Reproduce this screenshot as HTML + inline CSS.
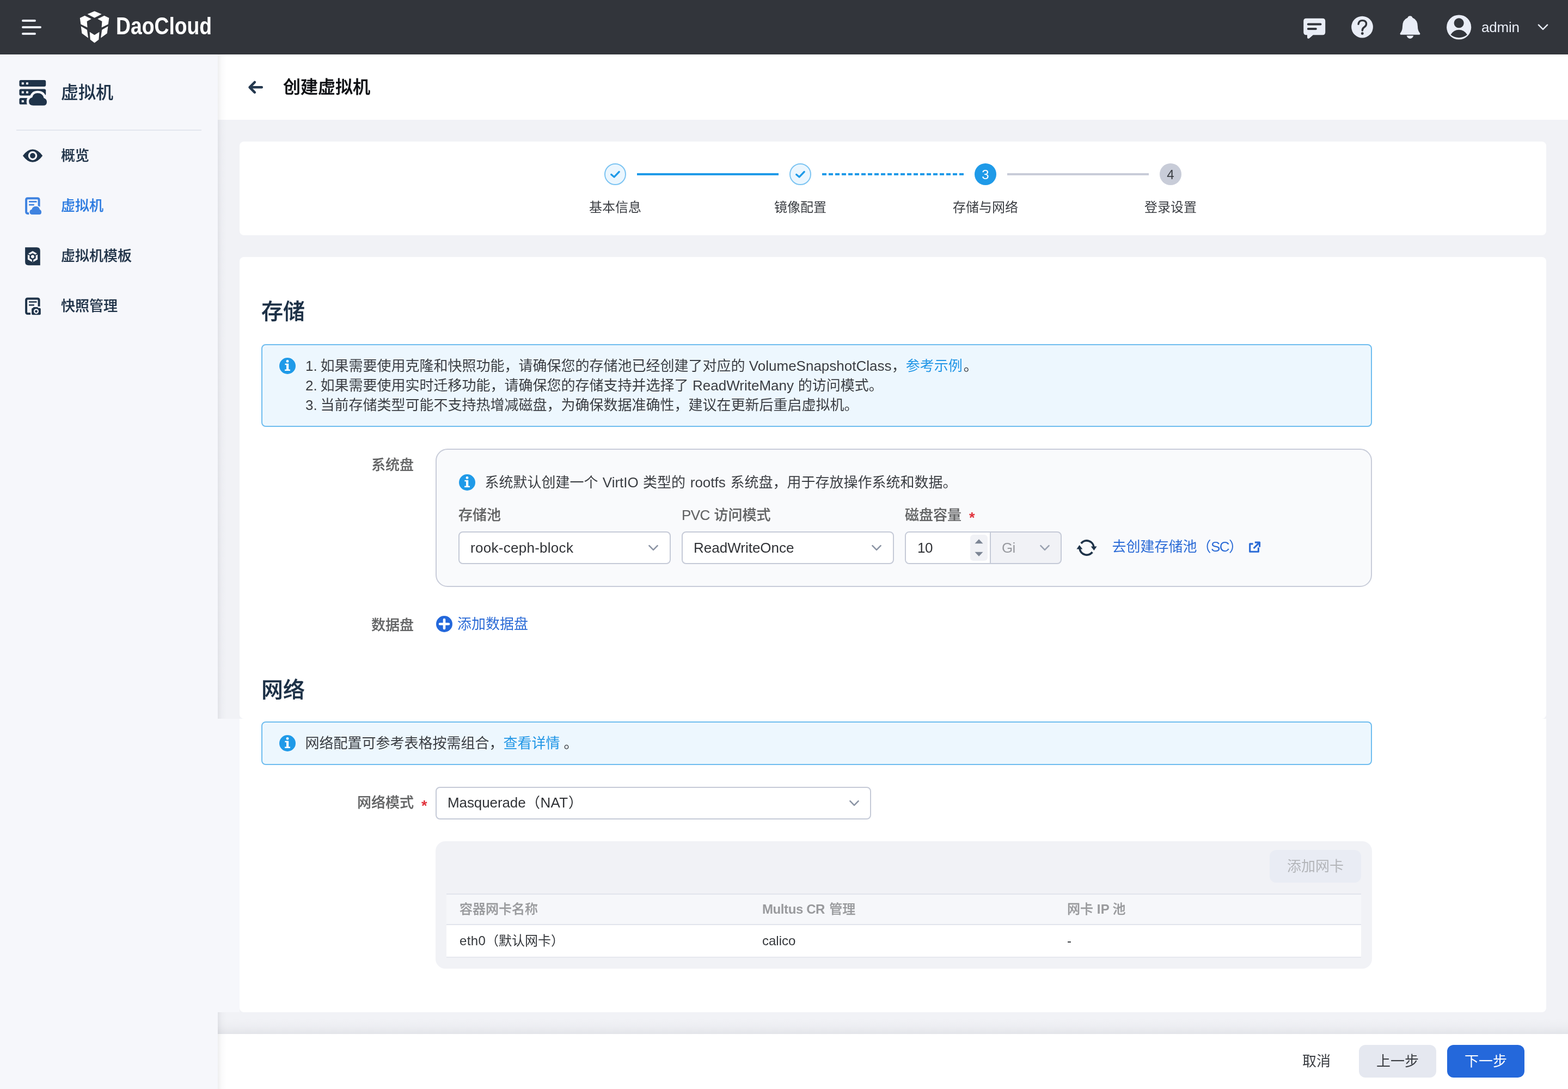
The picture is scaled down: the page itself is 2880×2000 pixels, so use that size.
<!DOCTYPE html>
<html lang="zh-CN">
<head>
<meta charset="utf-8">
<title>创建虚拟机</title>
<style>
*{box-sizing:border-box;margin:0;padding:0}
html,body{width:2880px;height:2000px;overflow:hidden;background:#f1f2f6}
body{will-change:transform;position:relative;font-family:"Liberation Sans","Noto Sans CJK SC",sans-serif;font-size:26px;color:#3a3d42;-webkit-font-smoothing:antialiased}
.abs{position:absolute}
.t{position:absolute;white-space:nowrap;line-height:1}
svg{position:absolute;display:block;overflow:visible}
a{text-decoration:none;color:inherit}

/* header */
#hdr{left:0;top:0;width:2880px;height:100px;background:#32353b}
/* sidebar */
#side{left:0;top:100px;width:400px;height:1900px;background:#f6f7fb}
#sideshadow1{left:400px;top:100px;width:16px;height:1220px;background:linear-gradient(90deg,rgba(30,35,50,.075),rgba(30,35,50,.02) 45%,rgba(30,35,50,0))}
#sideshadow2{left:400px;top:1859px;width:16px;height:141px;background:linear-gradient(90deg,rgba(30,35,50,.075),rgba(30,35,50,.02) 45%,rgba(30,35,50,0))}
#strip{left:400px;top:1320px;width:40px;height:539px;background:#f6f7fb}
.mi{font-size:26px;font-weight:500;-webkit-text-stroke:0.2px currentColor;color:#1f3247;left:112px}
.mi.on{color:#2c7be0}
/* title bar */
#tbar{left:400px;top:100px;width:2480px;height:120px;background:#fff}
/* cards */
.card{background:#fff;border-radius:8px}
#steps{left:440px;top:260px;width:2400px;height:172px}
#main1{left:440px;top:472px;width:2400px;height:848px;border-radius:8px}
#main2{left:440px;top:1320px;width:2400px;height:539px;border-radius:0 0 8px 8px}
/* footer */
#fshadow{left:400px;top:1871px;width:2480px;height:28px;background:linear-gradient(180deg,rgba(30,35,50,0) 0,rgba(30,35,50,.02) 50%,rgba(30,35,50,.065) 100%)}
#foot{left:400px;top:1899px;width:2480px;height:101px;background:#fff}

/* content */
.h2{font-size:40px;font-weight:500;-webkit-text-stroke:0.4px currentColor;color:#1c3046;line-height:56px}
.alert{background:#edf7fe;border:2px solid #6fbdef;border-radius:8px}
.p26{font-size:26px;line-height:36px;color:#3a3d42}
.lab{font-size:26px;line-height:36px;font-weight:500;-webkit-text-stroke:0.2px currentColor;color:#636465}
.l{display:inline-block;text-align:center;white-space:pre}
.lk{color:#2196e6}
.lk2{color:#2b6bd6}
.sel{background:#fff;border:2px solid #c5cad7;border-radius:8px}
.selt{font-size:26px;line-height:36px;color:#303236}
.req{color:#e1323c;font-size:27px;line-height:36px;font-weight:700}
.th{font-size:24px;line-height:34px;font-weight:500;-webkit-text-stroke:0.25px currentColor;color:#999a9d}
.td{font-size:24px;line-height:34px;color:#33363a}
.btn{border-radius:12px;font-size:26px;line-height:60px;text-align:center;height:60px}
</style>
</head>
<body>

<!-- ================= HEADER ================= -->
<div id="hdr" class="abs"></div>

<!-- ================= SIDEBAR ================= -->
<div id="side" class="abs"></div>

<!-- ================= MAIN BACKGROUND PARTS ================= -->
<div id="tbar" class="abs"></div>
<div id="sideshadow1" class="abs"></div>
<div id="strip" class="abs"></div>
<div id="steps" class="abs card"></div>
<div id="main1" class="abs card"></div>
<div id="main2" class="abs card"></div>
<div id="fshadow" class="abs"></div>
<div id="foot" class="abs"></div>
<div id="sideshadow2" class="abs"></div>

<!-- header content -->
<svg class="abs" style="left:40px;top:34px" width="40" height="32" viewBox="0 0 40 32">
  <rect x="0" y="2" width="26" height="4" rx="2" fill="#e9edf6"/>
  <rect x="0" y="14" width="36" height="4" rx="2" fill="#e9edf6"/>
  <rect x="0" y="26" width="26" height="4" rx="2" fill="#e9edf6"/>
</svg>
<svg class="abs" style="left:130px;top:10px" width="280" height="80" viewBox="0 0 2298 657">
  <g fill="#ffffff">
    <polygon points="250,132 357,87 465,132 357,187"/>
    <polygon points="137,188 210,153 310,203 243,240 250,333 150,283"/>
    <polygon points="577,188 504,153 404,203 471,240 464,333 564,283"/>
    <polygon points="153,315 245,368 262,490 167,420"/>
    <polygon points="561,315 469,368 452,490 547,420"/>
    <polygon points="285,400 357,445 430,400 421,515 357,565 293,515"/>
  </g>
  <text x="682" y="432" font-family="'Liberation Sans',sans-serif" font-weight="700" font-size="361" fill="#ffffff" textLength="1445" lengthAdjust="spacingAndGlyphs">DaoCloud</text>
</svg>
<svg class="abs" style="left:2360px;top:10px" width="520" height="80" viewBox="0 0 2298 354">
  <g fill="#e9edf6">
    <!-- message -->
    <path d="M172,105 H305 Q327,105 327,127 V218 Q327,240 305,240 H228 L196,268 Q182,274 180,260 V240 H172 Q150,240 150,218 V127 Q150,105 172,105 Z"/>
    <!-- help -->
    <circle cx="627" cy="175" r="88"/>
    <!-- bell -->
    <path d="M1016,85 Q1032,85 1036,100 Q1078,118 1078,172 Q1078,205 1094,222 Q1102,232 1092,238 H940 Q930,232 938,222 Q954,205 954,172 Q954,118 996,100 Q1000,85 1016,85 Z"/>
    <path d="M988,246 H1044 Q1036,270 1016,270 Q996,270 988,246 Z"/>
    <!-- avatar -->
    <circle cx="1413" cy="177" r="100"/>
  </g>
  <g fill="none" stroke="#32353b" stroke-linecap="round">
    <path d="M188,153 H288" stroke-width="18"/>
    <path d="M188,190 H250" stroke-width="18"/>
    <path d="M596,152 Q600,122 628,122 Q660,122 660,150 Q660,166 644,176 Q628,186 628,204" stroke-width="15"/>
  </g>
  <circle cx="628" cy="228" r="11" fill="#32353b"/>
  <circle cx="1413" cy="143" r="40" fill="#32353b"/>
  <path d="M1346,238 Q1370,198 1413,198 Q1456,198 1480,238 Q1452,262 1413,262 Q1374,262 1346,238 Z" fill="#32353b"/>
  <path d="M2060,158 L2096,194 L2132,158" fill="none" stroke="#e9edf6" stroke-width="11" stroke-linecap="round" stroke-linejoin="round"/>
</svg>
<div class="t" style="left:2721px;top:34px;font-size:26px;line-height:32px;color:#e9edf6;letter-spacing:-0.2px">admin</div>

<!-- sidebar content -->
<svg class="abs" style="left:20px;top:130px" width="240" height="80" viewBox="0 0 2298 766">
  <g fill="#1f3349">
    <rect x="148" y="163" width="467" height="114" rx="28"/>
    <rect x="148" y="320" width="467" height="115" rx="28"/>
    <rect x="148" y="478" width="300" height="114" rx="28"/>
  </g>
  <g fill="#f6f7fb">
    <rect x="190" y="203" width="38" height="38" rx="4"/>
    <rect x="268" y="203" width="38" height="38" rx="4"/>
    <rect x="190" y="360" width="38" height="38" rx="4"/>
    <rect x="268" y="360" width="38" height="38" rx="4"/>
    <rect x="190" y="517" width="38" height="38" rx="4"/>
  </g>
  <path id="cl0" d="M395,610 Q317,610 317,540 Q317,480 375,468 Q392,393 470,393 Q560,393 580,478 Q632,495 632,550 Q632,610 570,610 Z" fill="#1f3349" stroke="#f6f7fb" stroke-width="84" stroke-linejoin="round" paint-order="stroke"/>
</svg>
<div class="t" style="left:112px;top:145.5px;font-size:32px;line-height:48px;font-weight:500;-webkit-text-stroke:0.2px currentColor;color:#1f3349">虚拟机</div>
<div class="abs" style="left:30px;top:238px;width:340px;height:2px;background:#e3e6ee"></div>

<svg class="abs" style="left:20px;top:250px" width="240" height="160" viewBox="0 0 2298 1532">
  <path d="M210,345 Q290,233 383,233 Q476,233 557,345 Q476,458 383,458 Q290,458 210,345 Z" fill="#1f3349"/>
  <circle cx="383" cy="345" r="79" fill="#f6f7fb"/>
  <circle cx="383" cy="345" r="47" fill="#1f3349"/>
  <!-- vm icon (active) -->
  <path d="M320,1359 H296 Q269,1359 269,1332 V1121 Q269,1094 296,1094 H467 Q494,1094 494,1121 V1240" fill="none" stroke="#3f83e0" stroke-width="38" stroke-linejoin="round"/>
  <path d="M317,1153 H455 M317,1208 H410" fill="none" stroke="#3f83e0" stroke-width="26"/>
  <path d="M375,1378 Q330,1378 330,1335 Q330,1298 366,1290 Q380,1235 440,1235 Q496,1235 508,1290 Q537,1302 537,1338 Q537,1378 498,1378 Z" fill="#3f83e0" stroke="#f6f7fb" stroke-width="32" paint-order="stroke"/>
</svg>
<div class="t mi" style="top:266px;line-height:40px">概览</div>
<div class="t mi on" style="top:358px;line-height:40px">虚拟机</div>
<div class="t mi" style="top:450px;line-height:40px">虚拟机模板</div>
<div class="t mi" style="top:542px;line-height:40px">快照管理</div>

<svg class="abs" style="left:20px;top:430px" width="240" height="160" viewBox="0 0 2298 1532">
  <!-- template icon -->
  <path d="M250,232 H455 Q515,232 515,292 V548 H310 Q250,548 250,488 Z" fill="#1f3349"/>
  <polygon points="383,297 470,347 470,445 383,495 296,445 296,347" fill="#f6f7fb"/>
  <polygon points="383,334 437,365 437,427 383,458 329,427 329,365" fill="#1f3349"/>
  <path d="M329,365 L296,347 M437,365 L470,347" stroke="#1f3349" stroke-width="20" fill="none"/>
  <circle cx="383" cy="396" r="29" fill="#f6f7fb"/>
  <path d="M383,452 V495 M334,368 L296,347 M432,368 L470,347" stroke="#1f3349" stroke-width="0" fill="none"/>
  <path d="M371,440 H395 V492 H371 Z" fill="#1f3349"/>
  <!-- snapshot icon -->
  <path d="M345,1399 H296 Q269,1399 269,1372 V1161 Q269,1134 296,1134 H467 Q494,1134 494,1161 V1270" fill="none" stroke="#1f3349" stroke-width="38" stroke-linejoin="round"/>
  <path d="M317,1192 H455 M317,1247 H410" fill="none" stroke="#1f3349" stroke-width="26"/>
  <path d="M400,1283 H470 L482,1300 H505 Q525,1300 525,1320 V1400 Q525,1420 505,1420 H385 Q365,1420 365,1400 V1320 Q365,1300 385,1300 Z" fill="#1f3349"/>
  <circle cx="445" cy="1358" r="44" fill="#f6f7fb"/>
  <circle cx="445" cy="1358" r="22" fill="#1f3349"/>
</svg>

<!-- title bar content -->
<svg class="abs" style="left:450px;top:140px" width="40" height="40" viewBox="0 0 40 40">
  <path d="M30.8,20.3 H8.8 M17.8,11 L8.6,20.3 L17.8,29.6" fill="none" stroke="#24384e" stroke-width="4.6" stroke-linecap="round" stroke-linejoin="round"/>
</svg>
<div class="t" style="left:520px;top:136px;font-size:32px;line-height:48px;font-weight:500;-webkit-text-stroke:0.45px currentColor;color:#0c0e12">创建虚拟机</div>

<!-- steps content -->
<div class="abs" style="left:1170px;top:318px;width:260px;height:4px;background:#1f9ae8"></div>
<div class="abs" style="left:1510px;top:318px;width:260px;height:4px;background:repeating-linear-gradient(90deg,#1f9ae8 0,#1f9ae8 8px,transparent 8px,transparent 12px)"></div>
<div class="abs" style="left:1850px;top:318px;width:260px;height:4px;background:#c8ccd8"></div>
<div class="abs" style="left:1110px;top:300px;width:40px;height:40px;border-radius:50%;background:#ebf6fe;border:2px solid #7cc4f2"></div>
<div class="abs" style="left:1450px;top:300px;width:40px;height:40px;border-radius:50%;background:#ebf6fe;border:2px solid #7cc4f2"></div>
<div class="abs" style="left:1790px;top:300px;width:40px;height:40px;border-radius:50%;background:#1f9ae8"></div>
<div class="abs" style="left:2130px;top:300px;width:40px;height:40px;border-radius:50%;background:#c8ccd8"></div>
<svg class="abs" style="left:1110px;top:300px" width="40" height="40" viewBox="0 0 40 40"><path d="M12.7,20.5 L18,25.1 L27.2,15.5" fill="none" stroke="#1f9ae8" stroke-width="3.3" stroke-linecap="round" stroke-linejoin="round"/></svg>
<svg class="abs" style="left:1450px;top:300px" width="40" height="40" viewBox="0 0 40 40"><path d="M12.7,20.5 L18,25.1 L27.2,15.5" fill="none" stroke="#1f9ae8" stroke-width="3.3" stroke-linecap="round" stroke-linejoin="round"/></svg>
<div class="t" style="left:1790px;top:300.6px;width:40px;text-align:center;font-size:24px;line-height:40px;color:#fff">3</div>
<div class="t" style="left:2130px;top:300.6px;width:40px;text-align:center;font-size:24px;line-height:40px;color:#3a3d42">4</div>
<div class="t st" style="left:1030px;top:362.8px;width:200px;text-align:center;font-size:24px;line-height:36px;color:#3a3d42">基本信息</div>
<div class="t st" style="left:1370px;top:362.8px;width:200px;text-align:center;font-size:24px;line-height:36px;color:#3a3d42">镜像配置</div>
<div class="t st" style="left:1710px;top:362.8px;width:200px;text-align:center;font-size:24px;line-height:36px;color:#3a3d42">存储与网络</div>
<div class="t st" style="left:2050px;top:362.8px;width:200px;text-align:center;font-size:24px;line-height:36px;color:#3a3d42">登录设置</div>

<!-- storage content -->
<div class="t h2" style="left:480px;top:543.5px">存储</div>
<div class="abs alert" style="left:480px;top:632px;width:2040px;height:152px"></div>
<svg class="abs" style="left:513px;top:657px" width="30" height="30" viewBox="-15 -15 30 30"><circle r="15" fill="#1f9ae8"/><circle cx="0" cy="-8.6" r="2.4" fill="#fff"/><path d="M-4.6,-4.3 H2.2 V6.4 H4.9 V8.9 H-4.9 V6.4 H-2 V-1.8 H-4.6 Z" fill="#fff"/></svg>
<div class="t p26" style="left:561px;top:654px"><span class="l" style="width:27.4px;text-align:left">1. </span>如果需要使用克隆和快照功能，请确保您的存储池已经创建了对应的<span class="l" style="width:269.3px"> VolumeSnapshotClass</span>，<a class="lk" style="margin-right:2px">参考示例</a>。</div>
<div class="t p26" style="left:561px;top:690px"><span class="l" style="width:27.4px;text-align:left">2. </span>如果需要使用实时迁移功能，请确保您的存储支持并选择了<span class="l" style="width:201.3px"> ReadWriteMany </span>的访问模式。</div>
<div class="t p26" style="left:561px;top:726px"><span class="l" style="width:27.4px;text-align:left">3. </span>当前存储类型可能不支持热增减磁盘，为确保数据准确性，建议在更新后重启虚拟机。</div>

<div class="t lab" style="left:560px;width:200px;text-align:right;top:835.8px">系统盘</div>
<div class="abs" style="left:800px;top:824px;width:1720px;height:254px;background:#f9fafc;border:2px solid #c8ccd9;border-radius:22px"></div>
<svg class="abs" style="left:843px;top:871px" width="30" height="30" viewBox="-15 -15 30 30"><circle r="15" fill="#1f9ae8"/><circle cx="0" cy="-8.6" r="2.4" fill="#fff"/><path d="M-4.6,-4.3 H2.2 V6.4 H4.9 V8.9 H-4.9 V6.4 H-2 V-1.8 H-4.6 Z" fill="#fff"/></svg>
<div class="t p26" style="left:890.5px;top:868px">系统默认创建一个<span class="l" style="width:82.5px"> VirtIO </span>类型的<span class="l" style="width:82.5px"> rootfs </span>系统盘，用于存放操作系统和数据。</div>
<div class="t lab" style="left:842px;top:928px">存储池</div>
<div class="t lab" style="left:1252px;top:928px"><span class="l" style="width:59.5px;text-align:left;letter-spacing:-0.6px">PVC </span>访问模式</div>
<div class="t lab" style="left:1662px;top:928px">磁盘容量</div>
<div class="t req" style="left:1780px;top:932.5px">*</div>

<div class="abs sel" style="left:842px;top:976px;width:390px;height:60px"></div>
<div class="t selt" style="left:864px;top:987.5px;letter-spacing:0.28px">rook-ceph-block</div>
<svg class="abs" style="left:1190px;top:1000px" width="20" height="12" viewBox="0 0 20 12"><path d="M2.4,2.2 L10,9.8 L17.6,2.2" fill="none" stroke="#8b94a4" stroke-width="2.6" stroke-linecap="round" stroke-linejoin="round"/></svg>
<div class="abs sel" style="left:1252px;top:976px;width:390px;height:60px"></div>
<div class="t selt" style="left:1274px;top:987.5px">ReadWriteOnce</div>
<svg class="abs" style="left:1600px;top:1000px" width="20" height="12" viewBox="0 0 20 12"><path d="M2.4,2.2 L10,9.8 L17.6,2.2" fill="none" stroke="#8b94a4" stroke-width="2.6" stroke-linecap="round" stroke-linejoin="round"/></svg>
<div class="abs sel" style="left:1662px;top:976px;width:288px;height:60px;background:#f1f2f6"></div>
<div class="abs" style="left:1664px;top:978px;width:154px;height:56px;background:#fff;border-radius:6px 0 0 6px"></div>
<div class="abs" style="left:1818px;top:978px;width:2px;height:56px;background:#c5cad7"></div>
<div class="t selt" style="left:1685px;top:988px;letter-spacing:-0.5px">10</div>
<div class="abs" style="left:1782px;top:982px;width:32px;height:48px;background:#f1f2f6;border-radius:6px"></div>
<svg class="abs" style="left:1782px;top:982px" width="32" height="48" viewBox="0 0 32 48"><path d="M8.5,16.3 L16,8.3 L23.5,16.3 Z M8.5,31.8 L16,39.8 L23.5,31.8 Z" fill="#7d8695"/></svg>
<div class="t selt" style="left:1840px;top:988px;color:#999ba0;letter-spacing:-0.8px">Gi</div>
<svg class="abs" style="left:1908.5px;top:1000px" width="20" height="12" viewBox="0 0 20 12"><path d="M2.4,2.2 L10,9.8 L17.6,2.2" fill="none" stroke="#9aa2b0" stroke-width="2.6" stroke-linecap="round" stroke-linejoin="round"/></svg>
<svg class="abs" style="left:1976px;top:986px" width="40" height="40" viewBox="-20 -20 40 40">
  <g fill="none" stroke="#1f3349" stroke-width="3.7">
    <path d="M-10.3,-8 A13,13 0 0 1 12.95,-1.2"/>
    <path d="M10.3,8 A13,13 0 0 1 -12.95,1.2"/>
  </g>
  <path d="M7.6,-2.6 L18.6,-2.6 L13.4,4.9 Z" fill="#1f3349"/>
  <path d="M-7.6,2.6 L-18.6,2.6 L-13.4,-4.9 Z" fill="#1f3349"/>
</svg>
<div class="t p26 lk2" style="left:2042.5px;top:985.8px">去创建存储池（<span class="l" style="width:32.5px;letter-spacing:-1.6px;text-indent:-0.8px">SC</span>）</div>
<svg class="abs" style="left:2293px;top:993px" width="24" height="24" viewBox="0 0 24 24"><g fill="none" stroke="#2b6bd6" stroke-width="3.1" stroke-linejoin="round"><path d="M8.6,5.9 H2.7 V20.3 H18.4 V12.5"/><path d="M11.8,3.1 H20.55 V11.8"/><path d="M9.6,14.1 L20,3.7"/></g></svg>

<div class="t lab" style="left:560px;width:200px;text-align:right;top:1129.9px">数据盘</div>
<svg class="abs" style="left:801px;top:1131px" width="30" height="30" viewBox="-15 -15 30 30"><circle r="15" fill="#2468db"/><path d="M-8,0 H8 M0,-8 V8" stroke="#fff" stroke-width="4.6" stroke-linecap="round"/></svg>
<div class="t p26 lk2" style="left:840px;top:1128px">添加数据盘</div>

<!-- network content -->
<div class="t h2" style="left:480px;top:1238.5px">网络</div>
<div class="abs alert" style="left:480px;top:1325px;width:2040px;height:80px"></div>
<svg class="abs" style="left:513px;top:1350px" width="30" height="30" viewBox="-15 -15 30 30"><circle r="15" fill="#1f9ae8"/><circle cx="0" cy="-8.6" r="2.4" fill="#fff"/><path d="M-4.6,-4.3 H2.2 V6.4 H4.9 V8.9 H-4.9 V6.4 H-2 V-1.8 H-4.6 Z" fill="#fff"/></svg>
<div class="t p26" style="left:560.4px;top:1347px">网络配置可参考表格按需组合，<a class="lk">查看详情</a><span class="l" style="width:7px"> </span>。</div>

<div class="t lab" style="left:560px;width:200px;text-align:right;top:1456.2px">网络模式</div>
<div class="t req" style="left:774px;top:1461.5px">*</div>
<div class="abs sel" style="left:800px;top:1445px;width:800px;height:60px"></div>
<div class="t selt" style="left:822px;top:1456px"><span class="l" style="width:144px;text-align:left;letter-spacing:-0.1px">Masquerade</span>（<span class="l" style="width:52px;letter-spacing:0.3px">NAT</span>）</div>
<svg class="abs" style="left:1559px;top:1469px" width="20" height="12" viewBox="0 0 20 12"><path d="M2.4,2.2 L10,9.8 L17.6,2.2" fill="none" stroke="#8b94a4" stroke-width="2.6" stroke-linecap="round" stroke-linejoin="round"/></svg>
<div class="abs" style="left:800px;top:1545px;width:1720px;height:234px;background:#f1f2f6;border-radius:18px"></div>
<div class="abs btn" style="left:2332px;top:1561px;width:168px;background:#e9ecf4;color:#b3b5b9">添加网卡</div>
<div class="abs" style="left:820px;top:1641px;width:1680px;height:2px;background:#e1e4ec"></div>
<div class="abs" style="left:820px;top:1643px;width:1680px;height:54px;background:#f6f7fa"></div>
<div class="abs" style="left:820px;top:1697px;width:1680px;height:2px;background:#e1e4ec"></div>
<div class="abs" style="left:820px;top:1699px;width:1680px;height:58px;background:#fff"></div>
<div class="abs" style="left:820px;top:1757px;width:1680px;height:1.5px;background:#e6e8ef"></div>
<div class="t th" style="left:844px;top:1653px">容器网卡名称</div>
<div class="t th" style="left:1400px;top:1653px"><span class="l" style="width:123.2px;text-align:left;font-weight:700;-webkit-text-stroke:0;letter-spacing:-0.4px">Multus CR </span>管理</div>
<div class="t th" style="left:1960px;top:1653px">网卡<span class="l" style="font-weight:700;-webkit-text-stroke:0;width:35.6px;letter-spacing:0.2px"> IP </span>池</div>
<div class="t td" style="left:844px;top:1711px"><span class="l" style="width:48px;text-align:left;letter-spacing:0.4px">eth0</span>（默认网卡）</div>
<div class="t td" style="left:1400px;top:1711px">calico</div>
<div class="t td" style="left:1960px;top:1711px">-</div>

<!-- footer content -->
<div class="abs btn" style="left:2360px;top:1919px;width:116px;color:#3a3d42">取消</div>
<div class="abs btn" style="left:2496px;top:1919px;width:142px;background:#e5e8f0;color:#3a3d42">上一步</div>
<div class="abs btn" style="left:2658px;top:1919px;width:142px;background:#2468db;color:#fff">下一步</div>


<script>
(function fitScale(){
  var w = window.innerWidth || document.documentElement.clientWidth || 0;
  if (w > 0 && Math.abs(w - 2880) > 1) { document.body.style.zoom = (w / 2880); }
})();
</script>
</body>
</html>
